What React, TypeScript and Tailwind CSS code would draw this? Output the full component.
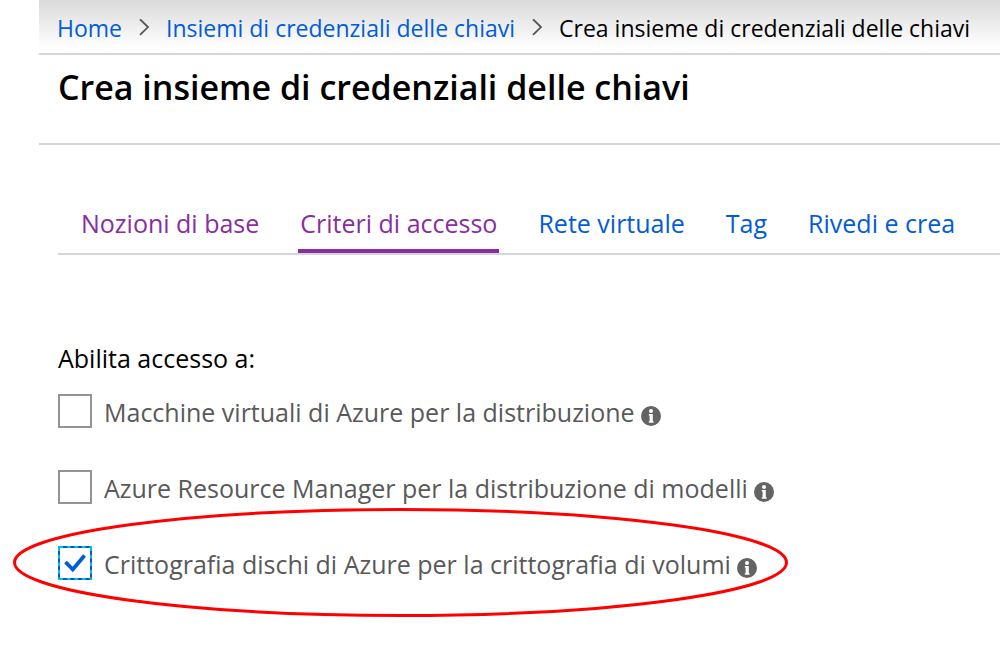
import { useState } from "react";

const tabs = [
  { label: "Nozioni di base", visited: true },
  { label: "Criteri di accesso", visited: true },
  { label: "Rete virtuale", visited: false },
  { label: "Tag", visited: false },
  { label: "Rivedi e crea", visited: false },
];

const options = [
  { id: "vm", label: "Macchine virtuali di Azure per la distribuzione" },
  { id: "arm", label: "Azure Resource Manager per la distribuzione di modelli" },
  { id: "disk", label: "Crittografia dischi di Azure per la crittografia di volumi", highlighted: true },
];

function Chevron() {
  return (
    <svg className="mx-4 h-[18px] w-3 shrink-0" viewBox="0 0 12 18" fill="none" stroke="#555" strokeWidth="1.8" aria-hidden="true">
      <path d="M2 .3 10 8.1 2 15.9" />
    </svg>
  );
}

function InfoIcon() {
  return (
    <svg className="size-5 shrink-0" viewBox="0 0 20 20" aria-hidden="true">
      <circle cx="10" cy="10" r="10" fill="#636363" />
      <circle cx="10" cy="4.9" r="2" fill="#fff" />
      <path d="M7.8 8h4v7.2h.8v1.6H7.8v-1.6h.8V9.5h-.8z" fill="#fff" />
    </svg>
  );
}

function Option({ id, label, highlighted, checked, onToggle }: {
  id: string;
  label: string;
  highlighted?: boolean;
  checked: boolean;
  onToggle: () => void;
}) {
  return (
    <div className="relative flex h-[34px] items-center">
      <span className="relative mr-3 size-[34px] shrink-0">
        <input
          id={id}
          type="checkbox"
          checked={checked}
          onChange={onToggle}
          className="block size-full appearance-none border-2 border-[#949494] bg-white checked:border-[#00bcf2]"
        />
        {checked && (
          <svg className="pointer-events-none absolute inset-0 size-full" viewBox="0 0 34 34" fill="none" aria-hidden="true">
            <path d="M1 5v26.5M33 5v26.5M5 1h26.5M5 33h26.5" stroke="#0a58b8" strokeWidth="2" strokeDasharray="4 3.5" />
            <path d="M7.5 16 14.8 23.5 26.5 9.5" stroke="#015cda" strokeWidth="3.8" />
          </svg>
        )}
      </span>
      <label htmlFor={id} className="mr-1.5 pt-0.5 text-[25px] leading-8 whitespace-nowrap text-[#595959]">{label}</label>
      <span className="pt-2.5">
        <InfoIcon />
      </span>
      {highlighted && (
        <svg className="pointer-events-none absolute -top-[38px] -left-[45px] h-[109px] w-[775px] max-w-none" viewBox="0 0 775 109" fill="none" aria-hidden="true">
          <ellipse cx="387.5" cy="54.5" rx="386" ry="53" stroke="#f00" strokeWidth="3" />
        </svg>
      )}
    </div>
  );
}

export default function App() {
  const [active, setActive] = useState("Criteri di accesso");
  const [checked, setChecked] = useState<string[]>(["disk"]);
  const toggle = (id: string) =>
    setChecked((c) => (c.includes(id) ? c.filter((x) => x !== id) : [...c, id]));

  return (
    <div className="min-h-screen overflow-x-hidden bg-white pl-[39px] font-['Open_Sans','Noto_Sans',sans-serif] text-black">
      <nav aria-label="Breadcrumb" className="flex h-[55px] items-center border-b-2 border-[#d6d6d6] bg-linear-to-b from-[#dadada] to-white to-90% pt-0.5 pl-[18px] text-[23px] leading-8 whitespace-nowrap">
        <a href="#home" className="text-[#015cda]">Home</a>
        <Chevron />
        <a href="#vaults" className="text-[#015cda]">Insiemi di credenziali delle chiavi</a>
        <Chevron />
        <span aria-current="page">Crea insieme di credenziali delle chiavi</span>
      </nav>
      <header className="h-[90px] border-b-2 border-[#d6d6d6] pt-2.5 pl-[19px]">
        <h1 className="text-[34px] leading-[44px] font-semibold whitespace-nowrap">Crea insieme di credenziali delle chiavi</h1>
      </header>
      <main className="pt-[58px] pl-[19px]">
        <div role="tablist" className="flex h-[52px] gap-[37px] border-b-2 border-[#d6d6d6] pl-[21px]">
          {tabs.map((t) => (
            <button
              key={t.label}
              type="button"
              role="tab"
              aria-selected={active === t.label}
              onClick={() => setActive(t.label)}
              className={`border-b-4 px-0.5 pb-1.5 text-[25px] leading-[40px] whitespace-nowrap ${t.visited ? "text-[#892da1]" : "text-[#015cda]"} ${active === t.label ? "border-[#892da1]" : "border-transparent"}`}
            >
              {t.label}
            </button>
          ))}
        </div>
        <fieldset className="pt-[87px]">
          <legend className="float-left text-[25px] leading-8">Abilita accesso a:</legend>
          <div className="clear-both flex flex-col gap-[42px] pt-5">
            {options.map((o) => (
              <Option key={o.id} {...o} checked={checked.includes(o.id)} onToggle={() => toggle(o.id)} />
            ))}
          </div>
        </fieldset>
      </main>
    </div>
  );
}
